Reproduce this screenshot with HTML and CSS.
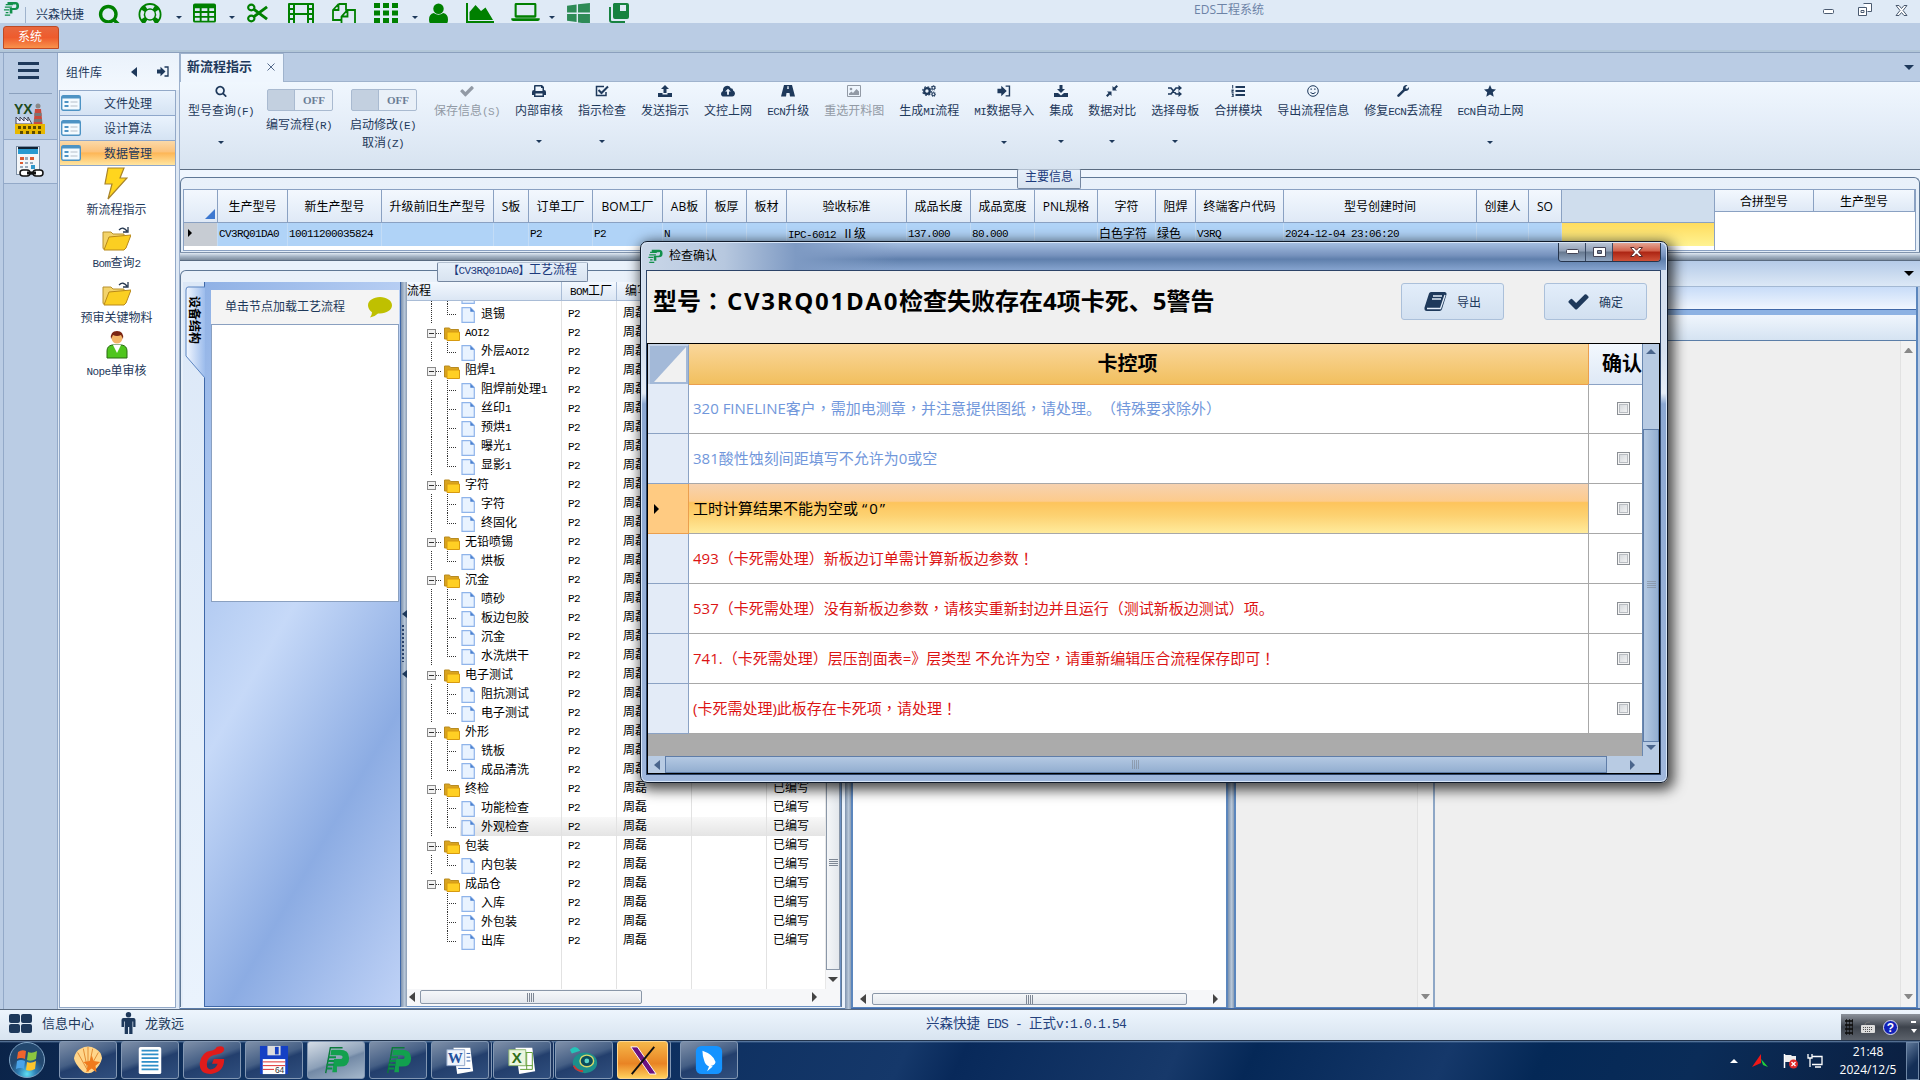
FILE: index.html
```
<!DOCTYPE html>
<html lang="zh-CN">
<head>
    <meta charset="UTF-8">
    <title>EDS工程系统</title>
    <link rel="stylesheet" href="styles.css">
</head>

<body>
<svg class="defs" width="0" height="0">
    <symbol id="i-search" viewBox="0 0 1792 1792"><path d="M1216 832q0-185-131.5-316.5t-316.5-131.5-316.5 131.5-131.5 316.5 131.5 316.5 316.5 131.5 316.5-131.5 131.5-316.5zm512 832q0 52-38 90t-90 38q-54 0-90-38l-343-342q-179 124-399 124-143 0-273.5-55.5t-225-150-150-225-55.5-273.5 55.5-273.5 150-225 225-150 273.5-55.5 273.5 55.5 225 150 150 225 55.5 273.5q0 220-124 399l343 343q37 37 37 90z"/></symbol>
    <symbol id="i-check" viewBox="90 250 1612 1300"><path d="M1671 566q0 40-28 68l-724 724-136 136q-28 28-68 28t-68-28l-136-136-362-362q-28-28-28-68t28-68l136-136q28-28 68-28t68 28l294 295 656-657q28-28 68-28t68 28l136 136q28 28 28 68z"/></symbol>
    <symbol id="i-ring" viewBox="0 0 24 24"><path fill-rule="evenodd" d="M12 0a12 12 0 1 0 0 24 12 12 0 0 0 0-24zm0 2c1.8 0 3.400.4 4.900 1.200l-2 3a6.500 6.500 0 0 0-5.800 0l-2-3A10 10 0 0 1 12 2zM3.200 7.100l3 2a6.500 6.500 0 0 0 0 5.800l-3 2a10 10 0 0 1 0-9.800zM12 22a10 10 0 0 1-4.900-1.200l2-3a6.500 6.500 0 0 0 5.800 0l2 3A10 10 0 0 1 12 22zm0-5a5 5 0 1 1 0-10 5 5 0 0 1 0 10zm8.800-.1l-3-2a6.500 6.500 0 0 0 0-5.800l3-2a10 10 0 0 1 0 9.800z"/></symbol>
    <symbol id="i-table" viewBox="0 0 24 20"><path fill-rule="evenodd" d="M2 0h20a2 2 0 0 1 2 2v16a2 2 0 0 1-2 2H2a2 2 0 0 1-2-2V2a2 2 0 0 1 2-2zM2 5v3h5V5zm7 0v3h6V5zm8 0v3h5V5zM2 10v3h5v-3zm7 0v3h6v-3zm8 0v3h5v-3zM2 15v3h5v-3zm7 0v3h6v-3zm8 0v3h5v-3z"/></symbol>
    <symbol id="i-cut" viewBox="0 0 22 20"><g fill="none" stroke="currentColor" stroke-width="2.200"><ellipse cx="4.500" cy="4.200" rx="3.300" ry="3"/><ellipse cx="4.500" cy="15.800" rx="3.300" ry="3"/><path d="M7 6l14 10.500M7 14L21 3.500" stroke-width="3"/></g></symbol>
    <symbol id="i-film" viewBox="0 0 26 22"><path fill-rule="evenodd" d="M1 0h24q1 0 1 1v20q0 1-1 1H1q-1 0-1-1V1q0-1 1-1zM2 2v3h3V2zm0 5v3h3V7zm0 5v3h3v-3zm0 5v3h3v-3zM7 2v8h12V2zm0 10v8h12v-8zM21 2v3h3V2zm0 5v3h3V7zm0 5v3h3v-3zm0 5v3h3v-3z"/></symbol>
    <symbol id="i-copy" viewBox="0 0 24 24"><path d="M6.500 1H14v6.500M6.500 1L1 7v10h8.500M6.500 1v6H1M15.500 7H23v16H9.500V13.500zv6.500h-6" fill="none" stroke="currentColor" stroke-width="1.800"/></symbol>
    <symbol id="i-grid" viewBox="0 0 24 20"><path d="M0 0h6v5H0zM9 0h6v5H9zM18 0h6v5h-6zM0 7.500h6v5H0zM9 7.500h6v5H9zM18 7.500h6v5h-6zM0 15h6v5H0zM9 15h6v5H9zM18 15h6v5h-6z"/></symbol>
    <symbol id="i-user" viewBox="0 0 20 22"><circle cx="10" cy="5.500" r="5.500"/><path d="M5 10q5 3.500 10 0 5 1 5 7 0 5-4 5H4q-4 0-4-5 0-6 5-7z"/></symbol>
    <symbol id="i-chart" viewBox="0 0 28 20"><path d="M0 0h2v18h26v2H0zM3.500 17V9l6-7 5.500 6 4.500-3.500L27 17z"/></symbol>
    <symbol id="i-laptop" viewBox="0 0 30 19"><path fill-rule="evenodd" d="M5 0h20q1.500 0 1.500 1.500V14q0 1.500-1.500 1.500H5Q3.500 15.500 3.500 14V1.500Q3.500 0 5 0zm.7 2v11h18.600V2zM0 16h30v1.500q0 1.500-2 1.500H2q-2 0-2-1.500z"/></symbol>
    <symbol id="i-win" viewBox="0 0 24 22"><path d="M0 3l10-1.500V10H0zM11.500 1.300L24 0v10H11.500zM0 11.500h10V20L0 18.500zM11.500 11.500H24V22l-12.500-1.500z"/></symbol>
    <symbol id="i-book2" viewBox="0 0 20 20"><path d="M5 0h13a2 2 0 0 1 2 2v12a2 2 0 0 1-2 2H6a2 2 0 0 1-2-2V1zM0 4h2v13q0 1 1 1h13v2H3q-3 0-3-3z"/><path d="M11 2h6v6h-6z" fill="#dfeaf6"/></symbol>
    <symbol id="i-print" viewBox="0 0 14 12"><path fill-rule="evenodd" d="M3 0h7l2 2v3q2 0 2 2v3h-2v2H2v-2H0V7q0-2 2-2V1q0-1 1-1zm.5 1.500V6h7V3H9V1.500zM3.500 8.500v2h7v-2z"/></symbol>
    <symbol id="i-checksq" viewBox="0 0 14 12"><path d="M11 7v3.500H1.500v-9H9" fill="none" stroke="currentColor" stroke-width="1.500"/><path d="M3.500 5l3 3L13 1.500" fill="none" stroke="currentColor" stroke-width="2"/></symbol>
    <symbol id="i-up" viewBox="0 0 14 12"><path d="M7 0l4 4H8.500v4h-3V4H3zM0 8h4.500v1.500h5V8H14v4H0z"/></symbol>
    <symbol id="i-down" viewBox="0 0 14 12"><path d="M5.500 0h3v4H11L7 8 3 4h2.500zM0 8h4l3 2.500L10 8h4v4H0z"/></symbol>
    <symbol id="i-cloud" viewBox="0 0 15 12"><path fill-rule="evenodd" d="M3 12q-3 0-3-3 0-2 2-3Q2 1 6.500 0.500q3 0 4 2.500 2.500 0 2.500 2.500 2 1 2 3.300Q14.500 12 12 12zM7.500 3.500l-3 3h2v3.500h2V6.500h2z"/></symbol>
    <symbol id="i-road" viewBox="0 0 14 12"><path fill-rule="evenodd" d="M3 0h8l3 11.500h-5L8.500 8h-3L5 11.500H0zM6.500 1L6.200 4h1.600L7.500 1z"/></symbol>
    <symbol id="i-img" viewBox="0 0 14 12"><path d="M.5.5h13v11H.5z" fill="none" stroke="currentColor"/><circle cx="4" cy="4" r="1.300"/><path d="M2 10V8.500l2.500-2L6 8l3.500-4L12 6.500V10z"/></symbol>
    <symbol id="i-cogs" viewBox="0 0 15 13"><g fill="none" stroke="currentColor"><circle cx="5.300" cy="6.500" r="3" stroke-width="2.400"/><circle cx="5.300" cy="6.500" r="4.700" stroke-width="1.200" stroke-dasharray="1.900 1.800"/><circle cx="12.300" cy="3" r="1.600" stroke-width="1.200"/><circle cx="12.300" cy="10" r="1.600" stroke-width="1.200"/><circle cx="12.300" cy="3" r="2.500" stroke-dasharray="1 1"/><circle cx="12.300" cy="10" r="2.500" stroke-dasharray="1 1"/></g></symbol>
    <symbol id="i-in" viewBox="0 0 12 11"><path d="M0 3.500h3.500V.8L8.500 5.500l-5 4.700V7.500H0z"/><path d="M7.500 1H11v9H7.500" fill="none" stroke="currentColor" stroke-width="1.300"/></symbol>
    <symbol id="i-compress" viewBox="0 0 12 12"><path d="M1 6.500h4.500V11L4 9.500 1.500 12 0 10.500 2.500 8zM6.500 1L8 2.500 10.500 0 12 1.500 9.500 4 11 5.500H6.500z"/></symbol>
    <symbol id="i-random" viewBox="0 0 14 12"><path d="M0 3h3l5 6h3M0 9h3l5-6h3" fill="none" stroke="currentColor" stroke-width="1.700"/><path d="M10.500 0L14 3l-3.500 3zM10.500 6L14 9l-3.500 3z"/></symbol>
    <symbol id="i-list" viewBox="0 0 14 12"><path d="M4.500 1H14v2H4.500zM4.500 5H14v2H4.500zM4.500 9H14v2H4.500zM1.200 0h1v3.500h-1zM.5 4.500h2.200v2H1.500V7h1.200v.7H.5zM.5 8.500h2.200V12H.5v-.8h1.200z"/></symbol>
    <symbol id="i-smile" viewBox="0 0 12 12"><circle cx="6" cy="6" r="5.300" fill="none" stroke="currentColor"/><path d="M3.500 7.500q2.500 2.500 5 0" fill="none" stroke="currentColor"/><path d="M3.500 3.500h1.300v1.300H3.500zM7.200 3.500h1.300v1.300H7.200z"/></symbol>
    <symbol id="i-wrench" viewBox="0 0 12 12"><path d="M.6 9.800L6 4.500Q5.500 1.500 8 .3q1.500-.6 2.500 0L8.500 2l.3 1.500 1.500.3L12 2q.3 2-1 3.300-1.300 1-3 .7l-5.600 5.500Q1.500 12.300.6 11.500q-.9-.8 0-1.700z"/></symbol>
    <symbol id="i-star" viewBox="0 0 12 12"><path d="M6 0l1.800 4 4.200.4-3.200 2.900.9 4.500L6 9.500l-3.700 2.300.9-4.500L0 4.400 4.200 4z"/></symbol>
    <symbol id="i-mod" viewBox="0 0 20 16"><rect x=".7" y=".7" width="18.600" height="14.600" rx="1.500" fill="#f4fbff" stroke="#4d93c4" stroke-width="1.400"/><path d="M1 1h18v2.500H1z" fill="#4d93c4"/><path d="M3.500 6h4v2h-4zM3.500 10h4v2h-4z" fill="#4d93c4"/><path d="M9.500 6h7v2h-7zM9.500 10h7v2h-7z" fill="#d5dde4"/></symbol>
    <symbol id="i-folder" viewBox="0 0 29 25"><path d="M1 6h8l2 2h11v15H2q-1 0-1-1z" fill="#f3d36a" stroke="#b8912c"/><path d="M7 11l22-2-5 13-2 2H2z" fill="#fbcf22" stroke="#b8891a"/><path d="M17 4q4-4 8 1M26 1v5h-5" fill="none" stroke="#24364f" stroke-width="1.300"/></symbol>
    <symbol id="i-dir" viewBox="0 0 16 14"><path d="M.5 1h5l1 1.500h8V12H.5z" fill="#d9a420" stroke="#b98b20"/><path d="M3 5h12.500v8.500H3z" fill="#ffcf24" stroke="#d79a10"/></symbol>
    <symbol id="i-doc" viewBox="0 0 14 16"><path d="M1 .7h8.500L13.300 4.500v10.800H1z" fill="#e9f3ff" stroke="#8fb4ea" stroke-width="1.200"/><path d="M9.300.7v4h4z" fill="#4a80d0"/></symbol>
    <symbol id="i-p" viewBox="0 0 17 18"><path d="M4 1h9q4 0 4 4.500T12.500 10H9.500v4h-3V8H12q2 0 2-2.500T12 4H4z"/><path d="M2 4h8M1 7h8M0 10h6M2 13h3M1 16h6" stroke="currentColor" stroke-width="1.400"/></symbol>
    <symbol id="i-bigp" viewBox="0 0 30 32"><path d="M10 5h9q10 0 10 9t-10 9h-3v6h-5l2-14h6q3 0 3-2t-3-2H9z" fill="#12a04e"/><path d="M4 30L9 3h13" fill="none" stroke="#0b7a3a" stroke-width="1.500"/><path d="M7 13h8M6 17h7M5 21h8M5 25h6" stroke="#0b8f46" stroke-width="2"/></symbol>
</svg>

<div class="titlebar">
    <svg class="logo"><use href="#i-p"/></svg>
    <span class="brand">兴森快捷</span>
    <div class="quick">
        <svg width="24" height="24"><use href="#i-search"/></svg>
        <svg width="24" height="23" style="margin-left:16px"><use href="#i-ring"/></svg><i class="caret" style="margin-left:14px"></i>
        <svg width="23" height="20" style="margin-left:11px"><use href="#i-table"/></svg><i class="caret" style="margin-left:13px"></i>
        <svg width="21" height="20" style="margin-left:12px"><use href="#i-cut"/></svg>
        <svg width="26" height="22" style="margin-left:20px"><use href="#i-film"/></svg>
        <svg width="24" height="24" style="margin-left:18px"><use href="#i-copy"/></svg>
        <svg width="24" height="20" style="margin-left:18px"><use href="#i-grid"/></svg><i class="caret" style="margin-left:14px"></i>
        <svg width="19" height="22" style="margin-left:11px"><use href="#i-user"/></svg>
        <svg width="28" height="20" style="margin-left:18px"><use href="#i-chart"/></svg>
        <svg width="29" height="18" style="margin-left:17px"><use href="#i-laptop"/></svg><i class="caret" style="margin-left:9px"></i>
        <svg class="sea" width="23" height="21" style="margin-left:12px"><use href="#i-win"/></svg>
        <svg class="dark" width="20" height="20" style="margin-left:19px"><use href="#i-book2"/></svg>
    </div>
    <span class="app-title">EDS工程系统</span>
    <svg class="win-ctl" width="86" height="16" fill="none" stroke="#4a5a70">
        <rect x=".5" y="9.500" width="10" height="4" rx="1" fill="#fff"/>
        <path d="M40.500 3.500h8v8h-4M35.500 7.500h8v8h-8zM38 10.500h3v2h-3z" fill="#fff"/>
        <path d="M73 5.500h3l2.500 3 2.500-3h3l-4 5 4 5h-3l-2.500-3-2.500 3h-3l4-5z" fill="#fff"/>
    </svg>
</div>

<div class="ribbon"><span class="ribbon-tab">系统</span></div>

<div class="workspace">
    <div class="rail">
        <div class="burger"><i></i><i></i><i></i></div>
        <div class="rail-item">
            <svg width="32" height="34" viewBox="0 0 32 34">
                <text x="0" y="12" font-size="14" font-weight="bold" font-family="Liberation Sans" fill="#204a1c">YX</text>
                <path d="M21 7h6l1.500 15h-9z" fill="#c94a3c"/><path d="M20.500 11h7v3h-7zM20 17h8v3h-8z" fill="#777"/><circle cx="24" cy="4" r="2.500" fill="#888"/>
                <path d="M2 22v-7l4 4v-4l4 4v-4l4 4v-4l4 7z" fill="#eef" stroke="#445"/>
                <path d="M1 22h30v10H1z" fill="#e8b800"/><path d="M4 24h3v3H4zM9 24h3v3H9zM14 24h3v3h-3zM19 24h3v3h-3zM24 24h3v3h-3zM6 29h3v3H6zM12 29h3v3h-3zM18 29h3v3h-3zM24 29h3v3h-3z" fill="#5c4a00"/>
            </svg>
        </div>
        <div class="rail-item on">
            <svg width="28" height="32" viewBox="0 0 28 32">
                <rect x=".5" y=".5" width="23" height="28" fill="#f3f6f9" stroke="#7d8fa5"/><path d="M2 1h20v2H2z" fill="#123"/><path d="M2 3h20v5H2z" fill="#2a9ad0"/>
                <path d="M4 11h4v3H4zM14 11h4v3h-4zM4 16h3v2H4z" fill="#dd5a30"/><path d="M9 11h3v3H9zM9 16h3v2H9zM14 16h3v2h-3zM4 20h3v2H4zM9 20h3v2H9z" fill="#9ab"/><path d="M15 19h4v4h-4z" fill="#39c"/>
                <g fill="#fff" stroke="#111" stroke-width="1.500"><rect x="4" y="24" width="10" height="6" rx="3"/><rect x="17" y="24" width="10" height="6" rx="3"/></g><path d="M11 27h9" stroke="#111" stroke-width="3"/>
            </svg>
        </div>
    </div>

    <div class="library">
        <div class="library-head">
            <span>组件库</span>
            <i class="tri-left"></i>
            <svg width="14" height="11"><use href="#i-in"/></svg>
        </div>
        <div class="library-body">
            <div class="group-btn"><svg><use href="#i-mod"/></svg><span>文件处理</span></div>
            <div class="group-btn"><svg><use href="#i-mod"/></svg><span>设计算法</span></div>
            <div class="group-btn active"><svg><use href="#i-mod"/></svg><span>数据管理</span></div>
            <div class="shortcut"><svg width="24" height="33" viewBox="0 0 24 33"><path d="M4 1h16l-4 10h7L4 32l4-15H1z" fill="#ffd51e" stroke="#a8842a" stroke-width="1.200"/></svg><span>新流程指示</span></div>
            <div class="shortcut"><svg width="29" height="25"><use href="#i-folder"/></svg><span><b class="en">Bom</b>查询<b class="en">2</b></span></div>
            <div class="shortcut"><svg width="29" height="25"><use href="#i-folder"/></svg><span>预审关键物料</span></div>
            <div class="shortcut"><svg width="22" height="29" viewBox="0 0 22 29"><path d="M1 28v-7q0-5 5-6h10q5 1 5 6v7z" fill="#4fc51d" stroke="#286b12"/><path d="M7 15h8l-4 8z" fill="#fff"/><circle cx="11" cy="8" r="5.500" fill="#f4b566"/><path d="M5 9Q4 1 11 1t6 8l-2-4q-4 2-8 0z" fill="#7a2412"/></svg><span><b class="en">Nope</b>单审核</span></div>
        </div>
    </div>

    <div class="main">
        <div class="doc-tabs">
            <div class="doc-tab"><span>新流程指示</span><svg width="8" height="8"><path d="M.5.5l7 7M7.500.5l-7 7" stroke="#53698a"/></svg></div>
            <i class="tri-down"></i>
        </div>

        <div class="toolbar">
            <div class="tool drop"><svg><use href="#i-search"/></svg><span>型号查询<b class="en">(F)</b></span></div>
            <div class="tool switch"><div class="toggle"><b>OFF</b></div><span>编写流程<b class="en">(R)</b></span></div>
            <div class="tool switch wide"><div class="toggle"><b>OFF</b></div><span>启动修改<b class="en">(E)</b><br>取消<b class="en">(Z)</b></span></div>
            <div class="tool off"><svg><use href="#i-check"/></svg><span>保存信息<b class="en">(S)</b></span></div>
            <div class="tool drop"><svg><use href="#i-print"/></svg><span>内部审核</span></div>
            <div class="tool drop"><svg><use href="#i-checksq"/></svg><span>指示检查</span></div>
            <div class="tool"><svg><use href="#i-up"/></svg><span>发送指示</span></div>
            <div class="tool"><svg><use href="#i-cloud"/></svg><span>文控上网</span></div>
            <div class="tool"><svg><use href="#i-road"/></svg><span><b class="en">ECN</b>升级</span></div>
            <div class="tool off"><svg><use href="#i-img"/></svg><span>重选开料图</span></div>
            <div class="tool"><svg><use href="#i-cogs"/></svg><span>生成<b class="en">MI</b>流程</span></div>
            <div class="tool drop"><svg><use href="#i-in"/></svg><span><b class="en">MI</b>数据导入</span></div>
            <div class="tool drop"><svg><use href="#i-down"/></svg><span>集成</span></div>
            <div class="tool drop"><svg><use href="#i-compress"/></svg><span>数据对比</span></div>
            <div class="tool drop"><svg><use href="#i-random"/></svg><span>选择母板</span></div>
            <div class="tool"><svg><use href="#i-list"/></svg><span>合拼模块</span></div>
            <div class="tool"><svg><use href="#i-smile"/></svg><span>导出流程信息</span></div>
            <div class="tool"><svg><use href="#i-wrench"/></svg><span>修复<b class="en">ECN</b>丢流程</span></div>
            <div class="tool drop"><svg><use href="#i-star"/></svg><span><b class="en">ECN</b>自动上网</span></div>
        </div>

        <div class="info">
            <div class="frame info-frame">
                <span class="frame-label info-label">主要信息</span>
                <div class="info-grid">
                    <div class="th corner"></div><div class="th">生产型号</div><div class="th">新生产型号</div><div class="th">升级前旧生产型号</div><div class="th">S板</div><div class="th">订单工厂</div><div class="th">BOM工厂</div><div class="th">AB板</div><div class="th">板厚</div><div class="th">板材</div><div class="th">验收标准</div><div class="th">成品长度</div><div class="th">成品宽度</div><div class="th">PNL规格</div><div class="th">字符</div><div class="th">阻焊</div><div class="th">终端客户代码</div><div class="th">型号创建时间</div><div class="th">创建人</div><div class="th">SO</div><div class="th blank"></div>
                    <div class="td mark"><i class="tri-right"></i></div><div class="td en">CV3RQ01DA0</div><div class="td en">10011200035824</div><div class="td"></div><div class="td"></div><div class="td en">P2</div><div class="td en">P2</div><div class="td en">N</div><div class="td"></div><div class="td"></div><div class="td"><b class="en">IPC-6012&nbsp;</b>Ⅱ级</div><div class="td en">137.000</div><div class="td en">80.000</div><div class="td"></div><div class="td">白色字符</div><div class="td">绿色</div><div class="td en">V3RQ</div><div class="td en">2024-12-04 23:06:20</div><div class="td"></div><div class="td"></div><div class="td yellow"></div>
                </div>
                <div class="merge-grid"><div class="th">合拼型号</div><div class="th">生产型号</div></div>
            </div>
        </div>
        <div class="hsplit"></div>

        <div class="lower">
            <div class="route">
                <div class="frame route-frame">
                    <span class="frame-label route-label"><b class="en">【CV3RQ01DA0】</b>工艺流程</span>
                    <div class="side-tabs">
                        <svg width="22" height="94"><path d="M22 1H5Q3 1 3 4v66l19 22" fill="url(#sideFill)" stroke="#5b85c2"/><defs><linearGradient id="sideFill"><stop offset="0" stop-color="#f2f7ff"/><stop offset="1" stop-color="#9cbcec"/></linearGradient></defs></svg>
                        <span>设备结构</span>
                    </div>
                    <div class="nodes">
                        <div class="nodes-head"><span>单击节点加载工艺流程</span><svg width="24" height="21" viewBox="0 0 24 21"><path d="M12 0c6.600 0 12 3.600 12 8.300s-5.400 8.200-12 8.200q-1 0-2-.1Q7 19.500 2 20.500q2-2.500 2-5.300Q0 12.500 0 8.300C0 3.600 5.400 0 12 0z" fill="#bfc000"/></svg></div>
                        <div class="nodes-list"></div>
                    </div>
                    <div class="vsplit grip"><i class="tri-left small"></i><i class="dots"></i><i class="tri-left small"></i></div>
                    <div class="tree">
                        <div class="tree-head"><div>流程</div><div><b class="en">BOM</b>工厂</div><div>编写</div><div></div><div></div></div>
                        <div class="tree-mid">
                            <div class="tree-body" id="tree"></div>
                            <div class="vscroll"><div class="vthumb"><i class="lines"></i></div><i class="tri-down gray"></i></div>
                        </div>
                        <div class="hscroll"><i class="tri-left gray"></i><div class="hthumb"><i class="bars"></i></div><i class="tri-right gray"></i></div>
                    </div>
                </div>
            </div>
            <div class="vsplit"></div>
            <div class="right">
                <div class="dock-head"><i class="tri-down black"></i></div>
                <div class="right-body">
                    <div class="pane white">
                        <div class="hscroll"><i class="tri-left gray"></i><div class="hthumb"><i class="bars"></i></div><i class="tri-right gray"></i></div>
                    </div>
                    <div class="vsplit"></div>
                    <div class="side">
                        <div class="side-strip"></div>
                        <div class="side-band"></div>
                        <div class="side-tool"></div>
                        <div class="side-cols">
                            <div class="pane gray"><div class="track"><i class="tri-down dim"></i></div></div>
                            <div class="pane gray rest"><div class="track"><i class="tri-up dim"></i><i class="tri-down dim"></i></div></div>
                        </div>
                    </div>
                </div>
            </div>
        </div>
    </div>
</div>

<div class="statusbar">
    <svg width="23" height="19" fill="#1f3864"><rect width="11" height="9" rx="2"/><rect x="12" width="11" height="9" rx="2"/><rect y="10" width="11" height="9" rx="2"/><rect x="12" y="10" width="11" height="9" rx="2"/></svg>
    <span class="st-a">信息中心</span>
    <svg width="15" height="23" fill="#1f3864"><circle cx="7.500" cy="2.800" r="2.700"/><path d="M2.500 6h10q2 0 2 2v7h-2.300V9.500h-.7V22H8.200v-7H7v7H3.700V9.500H3V15H.5V8q0-2 2-2z"/></svg>
    <span class="st-b">龙敦远</span>
    <span class="version">兴森快捷<b class="en"> EDS - </b>正式<b class="en">v:1.0.1.54</b></span>
    <div class="langbar">
        <i class="dots"></i>
        <svg width="14" height="12"><rect y="4" width="14" height="8" rx="1" fill="#ddd"/><path d="M2 6.500h10M2 8.500h10M4 10.500h6" stroke="#555" stroke-dasharray="1 1"/><path d="M4 4q0-3 5-3" stroke="#777" fill="none"/></svg>
        <svg width="15" height="15"><circle cx="7.500" cy="7.500" r="7" fill="#1020b8" stroke="#dde"/><text x="7.500" y="12" text-anchor="middle" font-size="12" font-weight="bold" font-family="Liberation Sans" fill="#fff">?</text></svg>
        <svg width="6" height="14" fill="#fff"><path d="M0 1h5v2H0zM0 9h6l-3 4z"/></svg>
    </div>
</div>

<div class="taskbar">
    <svg class="orb" width="38" height="38" viewBox="0 0 38 38"><defs><radialGradient id="orb" cy=".9"><stop offset="0" stop-color="#5fe0f5"/><stop offset=".5" stop-color="#2f7fb5"/><stop offset="1" stop-color="#23486f"/></radialGradient></defs><circle cx="19" cy="19" r="17.500" fill="url(#orb)" stroke="#7fa3c4"/><path d="M10 11q4-3 8-1l-1 8q-4-2-8 0z" fill="#f0642c"/><path d="M20 11q4 2 9-1l-1 8q-5 3-9 1z" fill="#8bc53f"/><path d="M9 20q4-2 8 0l-1 8q-4-2-8 0z" fill="#4aa3e8"/><path d="M19 21q4 2 9-1l-1 8q-5 3-9 1z" fill="#fbc52d"/></svg>
    <div class="task"><svg viewBox="0 0 32 32"><path d="M16 30q-4 0-6-2-8-8-9-14Q3 6 8 4q8-5 16 0 6 3 7 10-2 8-9 14-2 2-6 2z" fill="#ffd58a"/><path d="M16 28L5 8M16 28L11 4M16 28V2M16 28l5-24M16 28L27 8" stroke="#e08a30"/><path d="M20 11l2 6 7 1-5 4 1 7-5-4-6 4 2-7-5-4 7-1z" fill="#f07a1c"/></svg></div>
    <div class="task"><svg viewBox="0 0 32 32"><rect x="4" y="2" width="24" height="29" rx="2" fill="#fff"/><path d="M7 6h18M7 10h18M7 14h18M7 18h18M7 22h18M7 26h18" stroke="#2f8fc8" stroke-width="2"/></svg></div>
    <div class="task"><svg viewBox="0 0 32 32"><path d="M21 2q8-2 8 3-1 4-8 5-8 1-10 7-2 8 3 9 6 0 8-6h-6l2-5h11q0 14-14 16Q2 31 3 19 5 7 15 6q5-1 6-4z" fill="#e01b1b"/></svg></div>
    <div class="task"><svg viewBox="0 0 32 32"><path d="M1 1h30v30H1z" fill="#1540c4"/><path d="M9 1h14v10H9z" fill="#ddd"/><path d="M17 2h4v8h-4z" fill="#1540c4"/><path d="M4 15h24v16H4z" fill="#fff"/><path d="M4 18h24M4 22h24M4 26h12" stroke="#d22"/><text x="17" y="30" font-size="9" font-family="Liberation Sans" fill="#333">64</text></svg></div>
    <div class="task on"><svg viewBox="0 0 30 32"><use href="#i-bigp"/></svg></div>
    <div class="task"><svg viewBox="0 0 30 32"><use href="#i-bigp"/></svg></div>
    <div class="task stack"><svg viewBox="0 0 32 32"><path d="M9 3h18l3 25-17 3z" fill="#fff"/><path d="M23 9h4M23 13h4M23 17h4M14 25h13" stroke="#2b5aa8"/><path d="M2 5h19v17H2z" fill="#eef3fb" stroke="#8fa5c8"/><text x="3" y="19" font-size="16" font-weight="bold" font-family="Liberation Serif" fill="#24509c">W</text></svg></div>
    <div class="task stack"><svg viewBox="0 0 32 32"><path d="M9 3h18l3 25-17 3z" fill="#fff"/><path d="M18 8h9v18h-13M14 22h13M21 8v18" stroke="#5a9a2c" fill="none"/><path d="M2 5h18v17H2z" fill="#eaf5df" stroke="#8fb870"/><text x="5" y="19" font-size="16" font-weight="bold" font-family="Liberation Sans" fill="#2f6e1a">X</text></svg></div>
    <div class="task"><svg viewBox="0 0 32 32"><ellipse cx="17" cy="19" rx="13" ry="11" fill="#1c8f8c"/><ellipse cx="19" cy="17" rx="8" ry="7" fill="#d8d86a"/><ellipse cx="19" cy="17" rx="6.500" ry="5.500" fill="#0a4c5c"/><circle cx="19" cy="17" r="2.500" fill="#5fd6c8"/><path d="M1 5q6-6 11 1L3 9z" fill="#25c4b8"/><path d="M5 22q3 6 10 6" stroke="#c33" stroke-width="2" fill="none"/></svg></div>
    <div class="task orange stack"><svg viewBox="0 0 32 32"><path d="M3 2h7l20 29h-7z" fill="#6b1280" stroke="#fff"/><path d="M28 2L4 31" stroke="#111" stroke-width="2"/></svg></div>
    <div class="task last-task"><svg viewBox="0 0 32 32"><rect x="2" y="1" width="28" height="30" rx="6" fill="#1593ff"/><path d="M9 6q12 4 14 12-1 4-5 4l2 1-6 5 2-5q-4-2-5-6-2-5-2-11z" fill="#fff"/></svg></div>
    <div class="tray">
        <i class="tri-up white-tri"></i>
        <svg width="16" height="13"><path d="M9 0v9L0 13z" fill="#f01818"/><path d="M9 5l7 8-5-2z" fill="#22d13a"/></svg>
        <svg width="16" height="16"><path d="M1.500 1v14" stroke="#fff" stroke-width="1.500"/><path d="M2 2h6l1 1h4v6H2z" fill="#eee"/><circle cx="10.500" cy="11" r="4.500" fill="#e02828"/><path d="M8.500 9l4 4M12.500 9l-4 4" stroke="#fff" stroke-width="1.300"/></svg>
        <svg width="16" height="15"><path d="M5 3.500h10v8H5M8 14h6M1 1v4h4V1M3 5v9" fill="none" stroke="#fff" stroke-width="1.300"/></svg>
        <div class="clock">21:48<br>2024/12/5</div>
        <i class="peek"></i>
    </div>
</div>

<div class="dialog">
    <div class="dialog-title">
        <svg width="15" height="15"><use href="#i-p"/></svg><span>检查确认</span>
        <div class="dialog-ctl"><b><svg width="13" height="6"><rect x=".5" y=".5" width="12" height="4" rx="1" fill="#fff" stroke="#445"/></svg></b><b><svg width="13" height="10"><path d="M.5.500h12v9H.5zM4.500 3.500h4v3h-4z" fill="#fff" stroke="#445" fill-rule="evenodd"/></svg></b><b class="x"><svg width="13" height="10"><path d="M.5.500h3.500l2.500 2.700L9 .5h3.500L8.500 5l4 4.500H9L6.500 6.800 4 9.500H.5l4-4.500z" fill="#fff" stroke="#5a2a2a"/></svg></b></div>
    </div>
    <div class="dialog-body">
        <div class="dialog-top">
            <h1>型号<span class="mid" lang="zh-TW">：</span><span class="model">CV3RQ01DA0</span>检查失败存在4项卡死、5警告</h1>
            <button class="btn"><svg width="23" height="22" viewBox="0 0 23 22"><path d="M7 1h14q2 .5 1.500 2.500L18 18q-.6 2-2.500 2H3q-3 0-2.500-3.500L5 2.500Q5.500 1 7 1z"/><path d="M9 5h9M8 8h9M3 17.500h13.500L21 4" fill="none" stroke="#e4eefa" stroke-width="1.300"/></svg>导出</button>
            <button class="btn"><svg width="21" height="17"><use href="#i-check"/></svg>确定</button>
        </div>
        <div class="checks">
            <div class="checks-mid">
                <div class="checks-rows">
                    <div class="check-head"><div class="ch-corner"><svg width="36" height="36"><path d="M36 1v35H4z" fill="#f1f1f1"/></svg></div><div class="ch-item">卡控项</div><div class="ch-ok">确认</div></div>
                    <div class="check-row warn"><div></div><div>320 FINELINE客户<span class="mid" lang="zh-TW">，</span>需加电测章<span class="mid" lang="zh-TW">，</span>并注意提供图纸<span class="mid" lang="zh-TW">，</span>请处理。（特殊要求除外）</div><div><i class="box"></i></div></div>
                    <div class="check-row warn"><div></div><div>381酸性蚀刻间距填写不允许为0或空</div><div><i class="box"></i></div></div>
                    <div class="check-row sel"><div><i class="tri-right"></i></div><div>工时计算结果不能为空或<span class="quoted">“0”</span></div><div><i class="box"></i></div></div>
                    <div class="check-row dead"><div></div><div>493（卡死需处理）新板边订单需计算新板边参数<span class="mid" lang="zh-TW">！</span></div><div><i class="box"></i></div></div>
                    <div class="check-row dead"><div></div><div>537（卡死需处理）没有新板边参数<span class="mid" lang="zh-TW">，</span>请核实重新封边并且运行（测试新板边测试）项。</div><div><i class="box"></i></div></div>
                    <div class="check-row dead"><div></div><div>741.（卡死需处理）层压剖面表=》层类型 不允许为空<span class="mid" lang="zh-TW">，</span>请重新编辑压合流程保存即可<span class="mid" lang="zh-TW">！</span></div><div><i class="box"></i></div></div>
                    <div class="check-row dead"><div></div><div>(卡死需处理)此板存在卡死项<span class="mid" lang="zh-TW">，</span>请处理<span class="mid" lang="zh-TW">！</span></div><div><i class="box"></i></div></div>
                </div>
                <div class="bv"><i class="tri-up steel"></i><div class="bv-thumb"><i class="lines"></i></div><i class="tri-down steel"></i></div>
            </div>
            <div class="bh"><i class="tri-left steel"></i><div class="bh-thumb"><i class="bars"></i></div><i class="tri-right steel"></i></div>
        </div>
    </div>
</div>

<script>
    // each group: folder name followed by its process steps
    const groups = [
        ["", "", "退锡"],
        ["AOI2", "外层AOI2"],
        ["阻焊1", "阻焊前处理1", "丝印1", "预烘1", "曝光1", "显影1"],
        ["字符", "字符", "终固化"],
        ["无铅喷锡", "烘板"],
        ["沉金", "喷砂", "板边包胶", "沉金", "水洗烘干"],
        ["电子测试", "阻抗测试", "电子测试"],
        ["外形", "铣板", "成品清洗"],
        ["终检", "功能检查", "外观检查"],
        ["包装", "内包装"],
        ["成品仓", "入库", "外包装", "出库"]
    ];

    function latin(text) {
        return text.replace(/[A-Z0-9]+/g, '<b class="en">$&</b>');
    }

    function row(name, cls, icon) {
        // the first line is scrolled out, only its icon edge stays visible
        const cells = name ? '<div><b class="en">P2</b></div><div>周磊</div><div></div><div>已编写</div>'
            : '<div></div><div></div><div></div><div></div>';
        return `<div class="row ${cls}"><div class="name"><i class="root"></i><i class="branch"></i>` +
            `<svg><use href="#${icon}"/></svg><span>${latin(name)}</span></div>${cells}</div>`;
    }

    let html = "";
    groups.forEach((g, gi) => {
        const lastGroup = gi === groups.length - 1;
        if (gi > 0) {
            html += row(g[0], "dir", "i-dir");
        }
        g.slice(1).forEach((step, i) => {
            let cls = "step";
            if (i === g.length - 2) cls += " last";
            if (lastGroup) cls += " tail";
            if (step === "外观检查") cls += " current";
            html += row(step, cls, "i-doc");
        });
    });
    html += '<div class="row filler"><div></div><div></div><div></div><div></div><div></div></div>';
    document.getElementById("tree").innerHTML = html;
</script>
</body>
</html>
```

FILE: styles.css
```
* {
    box-sizing: border-box;
}

body {
    margin: 0;
    width: 1920px;
    height: 1080px;
    overflow: hidden;
    display: flex;
    flex-direction: column;
    font-family: "Liberation Sans", "Noto Sans CJK SC", sans-serif;
    font-size: 12px;
    line-height: 16px;
    color: #1e395b;
    background: #bacce4;
    white-space: nowrap;
}

svg {
    fill: currentColor;
    flex: none;
    display: block;
}

i, b.en {
    font-style: normal;
    flex: none;
}

.defs {
    position: absolute;
}

/* half-width latin, 6px per character */
.en {
    font-family: "Liberation Mono", "Noto Sans CJK SC", monospace;
    font-weight: normal;
    font-size: 11px;
    letter-spacing: -0.6px;
}

/* arrows */
.caret {
    border: 3px solid transparent;
    border-top-color: #1e395b;
    border-bottom: 0;
    margin-top: 13px;
}

.tri-left, .tri-right, .tri-up, .tri-down {
    display: block;
    border: 5px solid transparent;
}

.tri-left {
    border-right: 6px solid #1e395b;
    border-left: 0;
}

.tri-right {
    border-left: 5px solid #000;
    border-right: 0;
}

.tri-up {
    border-bottom: 5px solid #fff;
    border-top: 0;
}

.tri-down {
    border-top: 5px solid #1e395b;
    border-bottom: 0;
}

.tri-left.gray { border-right-color: #444; }
.tri-right.gray { border-left-color: #444; }
.tri-down.gray { border-top-color: #444; }
.tri-down.black { border-top-color: #000; }
.tri-up.dim { border-bottom-color: #888; }
.tri-down.dim { border-top-color: #888; }
.tri-left.steel { border-right-color: #4a658c; }
.tri-right.steel { border-left-color: #4a658c; }
.tri-up.steel { border-bottom-color: #4a658c; }
.tri-down.steel { border-top-color: #4a658c; }

.bars {
    width: 8px;
    height: 9px;
    background: repeating-linear-gradient(90deg, #7e8794 0 1px, transparent 1px 2px);
}

.lines {
    width: 9px;
    height: 8px;
    background: repeating-linear-gradient(#7e8794 0 1px, transparent 1px 2px);
}

/* title bar */
.titlebar {
    height: 23px;
    display: flex;
    background: #dfeaf6;
    flex: none;
}

.logo {
    width: 17px;
    height: 16px;
    margin: 1px 0 0 3px;
    color: #12904c;
}

.brand {
    margin: 7px 0 0 5px;
    padding-left: 10px;
    border-left: 1px solid #9fb3cd;
}

.quick {
    display: flex;
    height: 27px;
    width: 1096px;
    padding-top: 3px;
    margin-left: 14px;
    color: #008000;
}

.quick .sea { color: #2e8b57; }
.quick .dark { color: #178240; }

.app-title {
    color: #6d83a6;
    width: 72px;
    margin-top: 2px;
    font-family: "Open Sans", "Noto Sans CJK SC", sans-serif;
}

.win-ctl {
    margin-left: auto;
    margin-right: 11px;
}

.ribbon {
    height: 30px;
    flex: none;
    padding: 3px 0 0 3px;
    background: #bacce4;
    border-bottom: 1px solid #8ba0bd;
    box-shadow: inset 0 -2px #b2c6d8;
    display: flex;
}

.ribbon-tab {
    width: 56px;
    height: 23px;
    padding: 2px 0 0 14px;
    color: #fff;
    border: 1px solid #bd4a25;
    border-radius: 3px 3px 0 0;
    background: linear-gradient(#e8683e, #ee5b2d 50%, #f9924c);
}

.workspace {
    height: 956px;
    flex: none;
    display: flex;
    padding-left: 3px;
}

/* left rail */
.rail {
    width: 55px;
    border-left: 1px solid #93a9c8;
    border-right: 1px solid #93a9c8;
    flex: none;
}

.burger {
    height: 41px;
    margin: 0 5px;
    padding: 9px 13px 0 9px;
    border-bottom: 1px solid #8ba0bd;
}

.burger i {
    display: block;
    height: 3px;
    margin-bottom: 4px;
    background: #1e395b;
}

.rail-item {
    height: 46px;
    padding: 8px 0 0 10px;
    border-bottom: 1px solid #93a9c8;
}

.rail-item.on {
    height: 44px;
    padding: 6px 0 0 12px;
    background: #cad8eb;
}

/* component library */
.library {
    width: 122px;
    flex: none;
    background: #dfe9f5;
    border-right: 1px solid #9cb0cc;
    padding-bottom: 1px;
    display: flex;
    flex-direction: column;
}

.library-head {
    height: 37px;
    display: flex;
    align-items: center;
    padding: 0 8px 0 8px;
    background: linear-gradient(#eaf2fb, #f3f8fe);
}

.library-head span {
    width: 65px;
    padding-top: 3px;
}

.library-head svg {
    margin-left: 19px;
}

.library-body {
    flex: 1;
    margin-left: 1px;
    width: 117px;
    background: #fff;
    border: 1px solid #93a9c8;
    display: flex;
    flex-direction: column;
    align-items: center;
    padding-right: 2px;
}

.group-btn {
    height: 25px;
    width: 115px;
    margin-right: -2px;
    display: flex;
    align-items: center;
    border-bottom: 1px solid #8ea7cb;
    background: linear-gradient(#eaf3fd, #d5e3f3);
}

.group-btn svg {
    width: 20px;
    height: 16px;
    margin-left: 1px;
}

.group-btn span {
    margin-left: 23px;
    padding-top: 1px;
}

.group-btn.active {
    background: linear-gradient(#fbd9a8, #fcc27a 45%, #fdb656 50%, #ffe5a0);
}

.shortcut {
    display: flex;
    flex-direction: column;
    align-items: center;
    justify-content: flex-end;
    height: 54px;
    gap: 4px;
}

.shortcut:nth-child(4) {
    height: 52px;
    gap: 2px;
}

/* main area */
.main {
    flex: 1;
    min-width: 0;
    display: flex;
    flex-direction: column;
}

.doc-tabs {
    height: 29px;
    display: flex;
    align-items: center;
    justify-content: space-between;
    padding-right: 6px;
    border-bottom: 1px solid #9fb3cd;
}

.doc-tab {
    width: 104px;
    height: 29px;
    display: flex;
    align-items: center;
    justify-content: space-between;
    padding: 0 8px 2px 6px;
    border: 1px solid #9fb3cd;
    border-bottom: 0;
    background: #eff6fe;
    font-size: 13px;
    font-weight: bold;
}

.toolbar {
    height: 88px;
    display: flex;
    gap: 15px;
    padding: 3px 0 0 8px;
    border-bottom: 1px solid #5a6b80;
    background: linear-gradient(#f0f7fe, #e4edf8 50%, #d7e3f0);
}

.tool {
    height: 74px;
    display: flex;
    flex-direction: column;
    align-items: center;
    flex: none;
}

.tool svg {
    width: 14px;
    height: 12px;
}

.tool > span {
    margin-top: 6px;
    line-height: 17px;
    text-align: center;
}

.tool.off {
    color: #929aa5;
}

.tool.drop::after {
    content: "";
    margin-top: 20px;
    border: 3px solid transparent;
    border-top-color: #1e395b;
    border-bottom: 0;
}

.tool.switch {
    margin: 4px 0 0 -4px;
}

.tool.switch.wide {
    margin: 4px 2px 0 1px;
}

.toggle {
    width: 66px;
    height: 22px;
    margin-left: 2px;
    border: 1px solid #a9bad0;
    border-radius: 2px;
    background: linear-gradient(90deg, #c3d0e0 0 26px, #a9bad0 26px 27px, #e9f0f8 27px);
    padding: 2px 0 0 35px;
    color: #6b7d95;
    font-family: "Liberation Serif", serif;
    font-size: 11px;
}

.frame {
    position: relative;
    border: 1px solid #5f7896;
    border-bottom: 0;
    border-radius: 6px 6px 0 0;
    background: linear-gradient(#e9f1fa, #e3edf8);
    display: flex;
}

.frame-label {
    position: absolute;
    top: -9px;
    height: 20px;
    line-height: 15px;
    text-align: center;
    color: #1d3a7c;
    border: 1px solid #7587a0;
    border-top-color: #b3c0d0;
    border-radius: 2px;
    background: linear-gradient(#e7f0fa, #d8e3f0);
}

.info {
    height: 83px;
    padding-top: 7px;
    background: #eff6fe;
    border-bottom: 1px solid #8093ac;
}

.info-frame {
    height: 75px;
    padding: 11px 3px 1px 2px;
}

.info-label {
    left: 836px;
    width: 64px;
}

.info-grid {
    width: 1531px;
    display: grid;
    grid-template-columns: 34px 70px 94px 112px 35px 64px 70px 44px 40px 40px 120px 64px 64px 63px 58px 40px 88px 193px 52px 33px 153px;
    grid-template-rows: 33px 23px;
    background: #fff;
    border-top: 1px solid #8aa1c2;
    border-left: 1px solid #8aa1c2;
    border-bottom: 1px solid #8aa1c2;
}

.th {
    display: flex;
    align-items: center;
    justify-content: center;
    padding-top: 1px;
    color: #000;
    font-family: "Open Sans", "Noto Sans CJK SC", sans-serif;
    border-right: 1px solid #8aa1c2;
    border-bottom: 1px solid #8aa1c2;
    background: linear-gradient(#f3f8fe, #dfe9f6);
}

.th.corner {
    align-items: flex-end;
    justify-content: flex-end;
    padding: 0 2px 3px 0;
}

.th.corner::after {
    content: "";
    border: 5px solid #3d78d0;
    border-top-color: transparent;
    border-left-color: transparent;
}

.th.blank {
    background: #cfdded;
}

.td {
    padding: 3px 0 0 1px;
    color: #000;
    background: #b0d3f7;
    border-right: 1px solid #c3dcf6;
    overflow: hidden;
}

.td.mark {
    background: #c7ccd3;
    padding: 6px 0 0 4px;
}

.td.mark .tri-right {
    border-width: 4px 0 4px 4px;
}

.td.yellow {
    background: linear-gradient(#ffdc5e, #fff392);
}

.merge-grid {
    flex: 1;
    display: grid;
    grid-template-columns: 99px 1fr;
    grid-template-rows: 22px;
    background: #fff;
    border: 1px solid #8aa1c2;
}

.merge-grid .th {
    padding-top: 2px;
}

.hsplit {
    height: 8px;
    background: linear-gradient(#dfe8f2, #a4b3c4 50%, #7c8b9c);
    border-bottom: 1px solid #5a6b80;
}

.lower {
    flex: 1;
    min-height: 0;
    display: flex;
}

.vsplit {
    width: 6px;
    flex: none;
    background: linear-gradient(90deg, #7d92ad, #b9c8d9 60%, #8a9cb3);
}

/* left bottom: process route */
.route {
    width: 665px;
    flex: none;
    padding: 9px 3px 1px 0;
    background: #eaf2fb;
    border-bottom: 1px solid #5a7ba8;
}

.route-frame {
    height: 100%;
    padding: 11px 0 0 2px;
}

.route-label {
    left: 256px;
    width: 151px;
}

.side-tabs {
    width: 22px;
    flex: none;
    padding-top: 4px;
    background: linear-gradient(#dce8f7, #eaf3fd);
    border-right: 1px solid #3f68a8;
}

.side-tabs span {
    display: block;
    writing-mode: vertical-rl;
    text-orientation: sideways;
    font-weight: bold;
    color: #000;
    width: 18px;
    margin: -84px 0 0 1px;
}

.nodes {
    width: 196px;
    flex: none;
    padding: 8px 1px 0 6px;
    background: linear-gradient(120deg, #8fb1e5, #c6d9f8 45%, #8cace3 72%, #bfd2f6);
    border-right: 1px solid #3f68a8;
    border-bottom: 1px solid #3f68a8;
}

.nodes-head {
    height: 34px;
    display: flex;
    align-items: center;
    justify-content: space-between;
    padding: 0 7px 0 14px;
    background: #f4f4f4;
}

.nodes-list {
    height: 278px;
    background: #fff;
    border: 1px solid #8aa0c0;
}

.vsplit.grip {
    padding-top: 328px;
}

.tri-left.small {
    border-width: 4px 5px 4px 0;
}

.vsplit .dots {
    display: block;
    height: 37px;
    width: 2px;
    margin: 7px 2px 8px 1px;
    background: repeating-linear-gradient(#29426b 0 2px, transparent 2px 4px);
}

.tree {
    flex: 1;
    display: flex;
    flex-direction: column;
    background: #fff;
    color: #000;
    border-right: 1px solid #6d92c4;
    border-bottom: 1px solid #6d92c4;
}

.tree-head, .row {
    display: grid;
    grid-template-columns: 155px 55px 75px 75px 58px;
}

.tree-head {
    height: 19px;
    background: linear-gradient(#f3f8fe, #dbe6f4);
    border-bottom: 1px solid #a9bcd6;
}

.tree-head div {
    border-right: 1px solid #a9bcd6;
    padding: 1px 0 0 0;
}

.tree-head div:nth-child(2),
.tree-head div:nth-child(3) {
    padding-left: 8px;
}

.tree-mid {
    flex: 1;
    min-height: 0;
    display: flex;
    overflow: hidden;
}

.tree-body {
    width: 418px;
    margin-top: -16px;
}

.row {
    height: 19px;
}

.row > div {
    border-right: 1px solid #e2e2e2;
    padding: 1px 0 0 6px;
}

.row > div:last-child {
    border-right: 0;
}

.row .name {
    display: flex;
    align-items: center;
    padding: 0;
}

.row .root {
    width: 1px;
    height: 19px;
    margin-left: 24px;
    background: repeating-linear-gradient(#333 0 1px, transparent 1px 2px);
}

.tail .root {
    visibility: hidden;
}

.dir .root {
    width: 9px;
    height: 9px;
    margin: 2px 0 0 20px;
    border: 1px solid #8a8a8a;
    background: linear-gradient(#333, #333) center / 5px 1px no-repeat, #f2f2f2;
}

.dir .branch {
    width: 5px;
    height: 1px;
    margin: 2px 3px 0 0;
    background: repeating-linear-gradient(90deg, #333 0 1px, transparent 1px 2px);
}

.dir svg {
    width: 16px;
    height: 14px;
    margin: 2px 5px 0 0;
}

.step .branch {
    width: 10px;
    height: 19px;
    margin: 0 4px 0 15px;
    background:
        repeating-linear-gradient(#333 0 1px, transparent 1px 2px) left / 1px 100% no-repeat,
        repeating-linear-gradient(90deg, #333 0 1px, transparent 1px 2px) 0 10px / 100% 1px no-repeat;
}

.step.last .branch {
    background-size: 1px 10px, 100% 1px;
    background-position: 0 0, 0 10px;
}

.step svg {
    width: 14px;
    height: 16px;
    margin: 2px 6px 0 0;
}

.row.current {
    background: linear-gradient(#f8f8f8, #e4e4e4) right / 365px 100% no-repeat;
}

.row.filler {
    height: 60px;
}

.vscroll {
    width: 15px;
    border-left: 1px solid #e8e8e8;
    background: #f6f7f9;
    margin-left: auto;
    display: flex;
    flex-direction: column;
    align-items: center;
}

.vthumb {
    width: 14px;
    height: 669px;
    border: 1px solid #8a97a8;
    background: linear-gradient(90deg, #f4f6f8, #e3e7ec);
    padding: 557px 0 0 2px;
}

.vthumb i {
    display: block;
}

.vscroll .tri-down {
    margin-top: 7px;
}

.hscroll {
    height: 17px;
    padding: 1px 5px 2px 2px;
    display: flex;
    align-items: center;
    background: #f6f7f9;
}

.hscroll .tri-right {
    margin-left: auto;
}

.hthumb {
    height: 14px;
    width: 222px;
    margin-left: 5px;
    border: 1px solid #8a97a8;
    border-radius: 2px;
    background: linear-gradient(#f5f7f9, #e4e8ee);
    display: flex;
    align-items: center;
    justify-content: center;
}

.tree .hscroll .tri-right {
    margin-right: 18px;
}

/* right dock */
.right {
    flex: 1;
    min-width: 0;
    display: flex;
    flex-direction: column;
    border-bottom: 1px solid #3f68a8;
}

.dock-head {
    height: 26px;
    display: flex;
    align-items: center;
    justify-content: flex-end;
    padding-right: 6px;
    background: linear-gradient(#b5cbe8, #dce8f6);
    border-bottom: 1px solid #a3b8d3;
}

.right-body {
    flex: 1;
    min-height: 0;
    display: flex;
}

.pane.white {
    width: 377px;
    display: flex;
    flex-direction: column;
    justify-content: flex-end;
    background: #fff;
    border: solid #5b86bd;
    border-width: 0 2px 1px 2px;
}

.pane.white .hthumb {
    width: 315px;
    margin-left: 6px;
    height: 12px;
}

.pane.white .hscroll {
    padding: 1px 8px 0 7px;
}

.side {
    flex: 1;
    display: flex;
    flex-direction: column;
    border: solid #5b86bd;
    border-width: 0 2px 1px 2px;
    margin-right: 2px;
}

.side-strip {
    height: 23px;
    background: linear-gradient(#c8dcf8, #f0f6fe);
    border-bottom: 1px solid #3f68a8;
}

.side-band {
    height: 5px;
    background: #8db2e3;
}

.side-tool {
    height: 26px;
    background: linear-gradient(#f0f6fd, #d5e3f2);
    border-bottom: 1px solid #5b7ea8;
}

.side-cols {
    flex: 1;
    display: flex;
}

.pane.gray {
    width: 199px;
    display: flex;
    justify-content: flex-end;
    background: #efefef;
    border-right: 2px solid #8ea7c6;
}

.pane.rest {
    flex: 1;
    border-right: 0;
}

.track {
    width: 16px;
    border-left: 1px solid #e2e2e2;
    background: #f2f2f2;
    padding: 7px 3px 8px 3px;
    display: flex;
    flex-direction: column;
}

.track .tri-up, .track .tri-down {
    border-left-width: 4px;
    border-right-width: 4px;
}

.track .tri-down {
    margin-top: auto;
}

/* status bar */
.statusbar {
    height: 32px;
    flex: none;
    display: flex;
    align-items: center;
    padding: 0 0 3px 9px;
    border-top: 1px solid #5a6b80;
    border-bottom: 1px solid #22344d;
    background: linear-gradient(#edf5fd, #d8e4f0);
    font-size: 13px;
}

.st-a {
    width: 89px;
    padding-left: 10px;
}

.st-b {
    width: 790px;
    padding-left: 9px;
}

.version {
    font-size: 13.500px;
    padding-top: 1px;
    white-space: pre;
    color: #24417c;
}

.version .en {
    font-size: 13px;
    letter-spacing: -0.8px;
}

.langbar {
    margin: 0 0 -3px auto;
    width: 79px;
    height: 26px;
    align-self: flex-end;
    display: flex;
    align-items: center;
    padding: 0 4px;
    gap: 8px;
    background: linear-gradient(#8d939c, #3d434c 50%, #5c626b);
}

.langbar .dots {
    width: 8px;
    height: 16px;
    background: radial-gradient(#111 1px, transparent 1.500px) 0 0 / 3px 4px;
}

.langbar svg:last-child {
    margin-left: 5px;
    color: #fff;
}

/* taskbar */
.taskbar {
    height: 39px;
    flex: none;
    display: flex;
    gap: 4px;
    padding-left: 8px;
    background: linear-gradient(rgba(130, 160, 195, .8) 0, transparent 2px), linear-gradient(115deg, #0a2348 0, #123564 15%, #0a2c5c 30%, #15386a 47%, #08295a 50%, #17396a 61%, #052857 65%, #15386a 75%, #042856 80%, #0a2c58 88%, #0b1f40 100%);
}

.orb {
    margin-right: 9px;
}

.task {
    width: 58px;
    height: 38px;
    border: 1px solid #8297b3;
    border-radius: 3px;
    background: linear-gradient(160deg, #7f90a9, #455f85 45%, #233f6d 55%, #304f7e);
    display: flex;
    align-items: center;
    justify-content: center;
}

.task svg {
    width: 32px;
    height: 30px;
}

.task.on {
    background: linear-gradient(160deg, #d5dde6, #8ca0b8 50%, #7289a6 55%, #a5b8cb);
}

.task.orange {
    width: 51px;
    border-color: #ffd890;
    background: linear-gradient(#f6b84a, #e98424 60%, #ffd05c);
}

.task.stack {
    box-shadow: 2px 0 #1c3560, 3px 0 #8297b3;
}

.task.last-task {
    margin-left: 8px;
}

.tray {
    margin-left: auto;
    display: flex;
    align-items: center;
    color: #fff;
    gap: 15px;
}

.white-tri {
    border-width: 0 4px 4px;
    margin-right: -1px;
}

.tray svg:nth-of-type(3) {
    margin-left: -7px;
}

.clock {
    line-height: 18px;
    text-align: center;
    width: 60px;
    font-size: 12px;
    font-family: "Open Sans", sans-serif;
}

.peek {
    width: 13px;
    height: 38px;
    margin: 0 1px 0 -7px;
    border: 1px solid #6f87a6;
    background: linear-gradient(135deg, #5f7899, #142f57 60%);
}

/* check result dialog */
.dialog {
    position: absolute;
    left: 640px;
    top: 241px;
    width: 1028px;
    height: 542px;
    border: 1px solid #101a2a;
    border-radius: 7px;
    background: linear-gradient(#d5e0ef 20%, #e4ecf6 28%, #8ca8d2 30%, #9fb7dc);
    box-shadow: inset 0 0 0 1px #d8e6f8, 3px 4px 13px 3px rgba(0, 0, 0, .7);
    padding: 1px 6px 7px 5px;
    display: flex;
    flex-direction: column;
}

.dialog-title {
    height: 27px;
    flex: none;
    display: flex;
    align-items: center;
    margin: 0 -5px 0 -4px;
    padding: 0 5px 1px 6px;
    border-radius: 6px 6px 0 0;
    color: #000;
    background: linear-gradient(90deg, #c9d6e8 0, #b7c8df 8%, #7e9ac3 15%, transparent 25%), linear-gradient(#a4bde0, #7793be 45%, #5f7fac 60%, #86a4cf);
    font-family: "Open Sans", "Noto Sans CJK SC", sans-serif;
}

.dialog-title svg {
    color: #12904c;
}

.dialog-title span {
    margin-left: 6px;
}

.dialog-ctl {
    margin-left: auto;
    align-self: flex-start;
    display: flex;
    height: 19px;
    border: 1px solid #26354d;
    border-top: 0;
    border-radius: 0 0 4px 4px;
    overflow: hidden;
}

.dialog-ctl b {
    width: 27px;
    display: flex;
    align-items: center;
    justify-content: center;
    border-right: 1px solid #3a4a64;
    background: linear-gradient(#bac5d5, #909fb5 45%, #66788f 50%, #8fa4c0);
}

.dialog-ctl .x {
    width: 47px;
    border-right: 0;
    background: linear-gradient(#e3a593, #d2604a 45%, #ac2412 50%, #cf5138);
}

.dialog-body {
    flex: 1;
    min-height: 0;
    display: flex;
    flex-direction: column;
    border: 1px solid #2d4468;
    background: #f0f0f0;
}

.dialog-top {
    height: 72px;
    flex: none;
    display: flex;
    padding: 12px 13px 0 6px;
}

.dialog-top h1 {
    margin: 0 auto 0 0;
    font-family: "Open Sans", "Noto Sans CJK SC", sans-serif;
    font-size: 24px;
    line-height: 34px;
    color: #000;
}

.model {
    margin-left: 2px;
    letter-spacing: 1.700px;
}

/* punctuation centred in its cell */
.mid {
    font-family: "Noto Sans CJK TC", sans-serif;
}

.quoted {
    letter-spacing: 2px;
    padding-left: 4px;
}

.btn {
    width: 103px;
    height: 37px;
    margin-left: 40px;
    display: flex;
    align-items: center;
    justify-content: center;
    gap: 10px;
    border: 1px solid #abc0da;
    border-radius: 3px;
    background: linear-gradient(#e2edfa, #d2e0f0);
    color: #1e395b;
    font-size: 12px;
    font-family: "Liberation Sans", "Noto Sans CJK SC", sans-serif;
}

.checks {
    flex: 1;
    min-height: 0;
    display: flex;
    flex-direction: column;
    border: 1px solid #000;
    background: #ababab;
}

.checks-mid {
    height: 415px;
    display: flex;
}

.checks-rows {
    width: 994px;
    overflow: hidden;
}

.check-head, .check-row {
    display: grid;
    grid-template-columns: 41px 900px 53px;
    color: #000;
}

.check-head {
    height: 40px;
    font: bold 20px/40px "Open Sans", "Noto Sans CJK SC", sans-serif;
}

.ch-corner {
    border: 2px solid #c4d2e6;
    border-right: 1px solid #8ba2c4;
    border-bottom: 1px solid #8ba2c4;
    background: #a3b9d8;
}

.ch-item {
    text-align: center;
    padding-right: 22px;
    border-right: 1px solid #eb9f4e;
    border-bottom: 1px solid #eb9f4e;
    background: linear-gradient(#fad79b, #f1bf5e);
}

.ch-ok {
    padding-left: 13px;
    overflow: hidden;
    border-bottom: 1px solid #8ba2c4;
    background: linear-gradient(#f3f8fe, #dfe9f6);
}

.check-row {
    height: 50px;
    line-height: 48px;
    font-size: 15px;
    font-family: "Open Sans", "Noto Sans CJK SC", sans-serif;
    text-spacing-trim: space-all;
    background: #fff;
}

.check-row > div {
    border-right: 1px solid #a8a8a8;
    border-bottom: 1px solid #a8a8a8;
    padding-left: 4px;
}

.check-row > div:first-child {
    background: #e3ebf7;
    border-color: #8ba2c4;
}

.check-row > div:last-child {
    border-right: 0;
    padding: 18px 0 0 28px;
}

.check-row.warn { color: #7197db; }
.check-row.dead { color: #dc1414; }

.check-row.sel > div:first-child {
    padding: 20px 0 0 6px;
    background: #ffcb82;
    border-color: #eb9f4e;
}

.check-row.sel > div:nth-child(2) {
    background: linear-gradient(#f6d2b0, #fdcb8c 35%, #fdc45c 38%, #fdd272 65%, #ffeb9c);
}

.box {
    display: block;
    width: 13px;
    height: 13px;
    border: 1px solid #8b8f94;
    box-shadow: inset 0 0 0 1px #f4f4f4, inset 0 0 0 2px #b9bdc2;
    background: linear-gradient(135deg, #cfd3d8, #f8f8f8);
}

.bv {
    flex: 1;
    display: flex;
    flex-direction: column;
    align-items: center;
    justify-content: space-between;
    padding: 5px 0 6px;
    background: #b8cbe3;
    border-left: 1px solid #6a88b0;
}

.bv-thumb {
    width: 100%;
    height: 313px;
    margin-top: 71px;
    display: flex;
    align-items: center;
    justify-content: center;
    border: 1px solid #5f7da8;
    background: linear-gradient(90deg, #b4c9e3, #93aed0);
}

.bv-thumb .lines, .bh-thumb .bars {
    opacity: .6;
}

.bh {
    flex: 1;
    display: flex;
    align-items: center;
    padding: 0 24px 0 6px;
    background: #b8cbe3;
}

.bh-thumb {
    width: 942px;
    height: 17px;
    margin: 0 auto 0 5px;
    display: flex;
    align-items: center;
    justify-content: center;
    border: 1px solid #5f7da8;
    background: linear-gradient(#b4c9e3, #93aed0);
}
```
